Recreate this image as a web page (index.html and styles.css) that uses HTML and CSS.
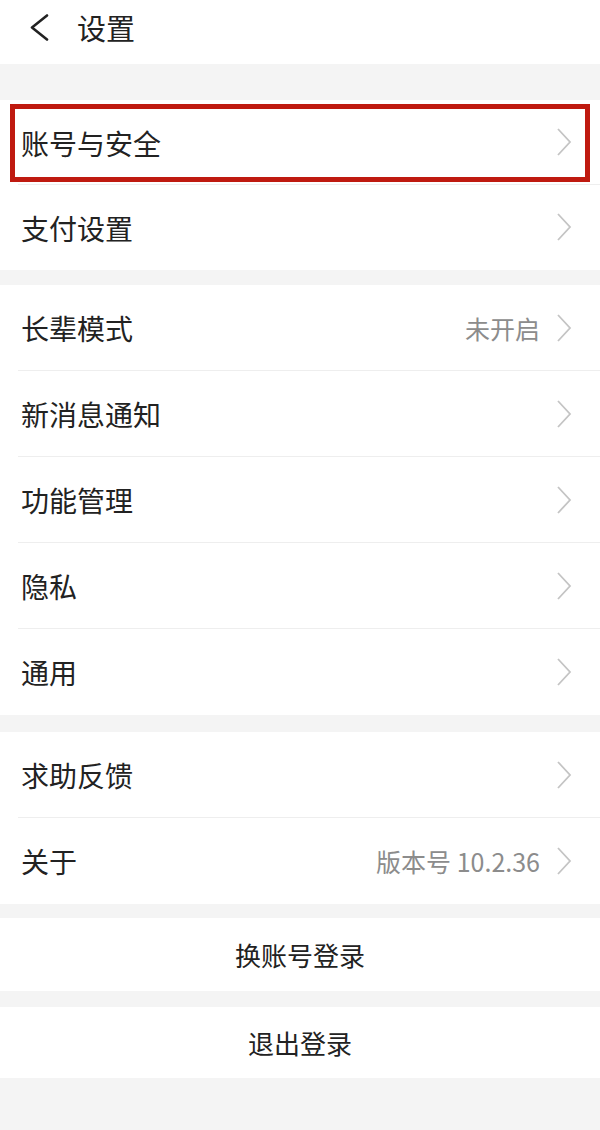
FILE: index.html
```html
<!DOCTYPE html>
<html lang="zh-CN">
<head>
    <meta charset="UTF-8">
    <title>设置</title>
    <link rel="stylesheet" href="styles.css">
</head>
<body>
    <!-- 상단 헤더 -->
    <header class="top">
        <svg class="back" width="24" height="28" viewBox="0 0 24 28">
            <path d="M19 1.5 L4 13.5 L19 25.5" fill="none" stroke="#222" stroke-width="2.6" stroke-linecap="round" stroke-linejoin="round"/>
        </svg>
        <h1 class="tit">设置</h1>
    </header>

    <!-- 그룹1 -->
    <ul class="grp g1">
        <li class="row on">
            <span class="lb">账号与安全</span>
            <svg class="arr" width="16" height="28" viewBox="0 0 16 28"><path d="M2 1 L14 14 L2 27" fill="none" stroke="#c4c4c4" stroke-width="1.8"/></svg>
        </li>
        <li class="row r2">
            <span class="lb">支付设置</span>
            <svg class="arr" width="16" height="28" viewBox="0 0 16 28"><path d="M2 1 L14 14 L2 27" fill="none" stroke="#c4c4c4" stroke-width="1.8"/></svg>
        </li>
    </ul>

    <!-- 그룹2 -->
    <ul class="grp g2">
        <li class="row">
            <span class="lb">长辈模式</span>
            <span class="val">未开启</span>
            <svg class="arr" width="16" height="28" viewBox="0 0 16 28"><path d="M2 1 L14 14 L2 27" fill="none" stroke="#c4c4c4" stroke-width="1.8"/></svg>
        </li>
        <li class="row">
            <span class="lb">新消息通知</span>
            <svg class="arr" width="16" height="28" viewBox="0 0 16 28"><path d="M2 1 L14 14 L2 27" fill="none" stroke="#c4c4c4" stroke-width="1.8"/></svg>
        </li>
        <li class="row">
            <span class="lb">功能管理</span>
            <svg class="arr" width="16" height="28" viewBox="0 0 16 28"><path d="M2 1 L14 14 L2 27" fill="none" stroke="#c4c4c4" stroke-width="1.8"/></svg>
        </li>
        <li class="row">
            <span class="lb">隐私</span>
            <svg class="arr" width="16" height="28" viewBox="0 0 16 28"><path d="M2 1 L14 14 L2 27" fill="none" stroke="#c4c4c4" stroke-width="1.8"/></svg>
        </li>
        <li class="row">
            <span class="lb">通用</span>
            <svg class="arr" width="16" height="28" viewBox="0 0 16 28"><path d="M2 1 L14 14 L2 27" fill="none" stroke="#c4c4c4" stroke-width="1.8"/></svg>
        </li>
    </ul>

    <!-- 그룹3 -->
    <ul class="grp g3">
        <li class="row">
            <span class="lb">求助反馈</span>
            <svg class="arr" width="16" height="28" viewBox="0 0 16 28"><path d="M2 1 L14 14 L2 27" fill="none" stroke="#c4c4c4" stroke-width="1.8"/></svg>
        </li>
        <li class="row">
            <span class="lb">关于</span>
            <span class="val">版本号 10.2.36</span>
            <svg class="arr" width="16" height="28" viewBox="0 0 16 28"><path d="M2 1 L14 14 L2 27" fill="none" stroke="#c4c4c4" stroke-width="1.8"/></svg>
        </li>
    </ul>

    <!-- 하단 버튼 -->
    <div class="btn b1">换账号登录</div>
    <div class="btn b2">退出登录</div>
</body>
</html>
```

FILE: styles.css
```css
html,body{
    margin: 0;padding: 0;
}
body{
    width: 600px; height: 1130px;
    background-color: #f4f4f4;
    font-family: "Noto Sans CJK SC", "Noto Sans", sans-serif;
    color: #222;
}
ul{
    margin: 0; padding: 0; list-style: none;
}

/* 헤더 */
.top{
    height: 64px;
    background-color: #fff;
    display: flex; align-items: center;
    padding-left: 28px;
}
.back{
    margin-top: -8px;
}
.tit{
    margin: -10px 0 0 25px;
    font-size: 29px; font-weight: normal;
    line-height: 40px;
}

/* 그룹 */
.grp{
    background-color: #fff;
}
.g1{ margin-top: 36px; }
.g2{ margin-top: 15px; }
.g3{ margin-top: 17px; }

.row{
    height: 86px;
    display: flex; align-items: center;
    padding: 0 28px 0 21px;
    position: relative;
}
.g1 .row{ height: 85px; }
/* 구분선 */
.row + .row::before{
    content: '';
    position: absolute;
    top: -1px; left: 18px; right: 0;
    height: 1px;
    background-color: #eeeeee;
}
.lb{
    flex: 1;
    font-size: 28px;
    line-height: 40px;
}
.val{
    font-size: 25px;
    color: #8c8c8c;
    margin-right: 16px;
}
.arr{
    display: block;
    margin-top: -1px;
}

/* 빨간 강조 박스 */
.on::after{
    content: '';
    position: absolute;
    top: 4px; bottom: 3px; left: 10px; right: 10px;
    border: 5px solid #bf1a10;
}

/* 버튼 */
.btn{
    background-color: #fff;
    text-align: center;
    font-size: 26px;
}
.b1{
    margin-top: 14px;
    height: 73px; line-height: 73px;
}
.b2{
    margin-top: 16px;
    height: 71px; line-height: 71px;
}
```
